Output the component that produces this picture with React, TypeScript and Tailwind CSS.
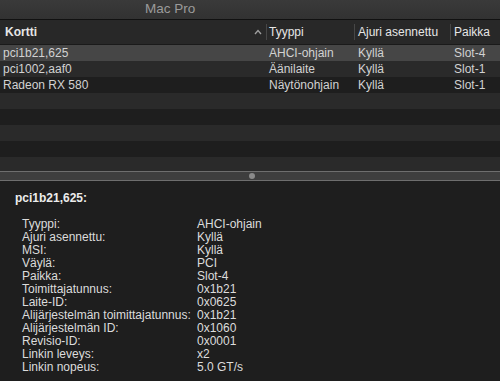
import React from "react";

interface Device {
  name: string;
  type: string;
  driver: string;
  slot: string;
}

const devices: Device[] = [
  { name: "pci1b21,625", type: "AHCI-ohjain", driver: "Kyllä", slot: "Slot-4" },
  { name: "pci1002,aaf0", type: "Äänilaite", driver: "Kyllä", slot: "Slot-1" },
  { name: "Radeon RX 580", type: "Näytönohjain", driver: "Kyllä", slot: "Slot-1" },
];

const details: [string, string][] = [
  ["Tyyppi:", "AHCI-ohjain"],
  ["Ajuri asennettu:", "Kyllä"],
  ["MSI:", "Kyllä"],
  ["Väylä:", "PCI"],
  ["Paikka:", "Slot-4"],
  ["Toimittajatunnus:", "0x1b21"],
  ["Laite-ID:", "0x0625"],
  ["Alijärjestelmän toimittajatunnus:", "0x1b21"],
  ["Alijärjestelmän ID:", "0x1060"],
  ["Revisio-ID:", "0x0001"],
  ["Linkin leveys:", "x2"],
  ["Linkin nopeus:", "5.0 GT/s"],
];

const App: React.FC = () => {
  const rows = Array.from({ length: 8 }, (_, i) => devices[i]);

  return (
    <div
      className="w-[500px] h-[381px] overflow-hidden bg-[#1e1e1e] flex flex-col text-[12px]"
      style={{ fontFamily: '"Liberation Sans", Arial, sans-serif' }}
    >
      {/* Title bar */}
      <div className="h-[20px] shrink-0 bg-gradient-to-b from-[#3a3a3a] to-[#323232] border-b border-[#111] flex items-center">
        <span className="ml-[145px] text-[13.5px] text-[#9b9b9b]">Mac Pro</span>
      </div>

      {/* Column headers */}
      <div className="h-[25px] shrink-0 bg-[#282828] border-b border-[#1a1a1a] flex items-center text-[#e6e6e6]">
        <div className="w-[250px] pl-[5px] font-bold">Kortti</div>
        <div className="w-[16px] flex items-center justify-center">
          <svg width="8" height="6" viewBox="0 0 8 6">
            <path d="M1 5 L4 1.5 L7 5" fill="none" stroke="#a0a0a0" strokeWidth="1.3" />
          </svg>
        </div>
        <div className="w-[88px] h-[16px] border-l border-[#474747] pl-[2px] flex items-center">Tyyppi</div>
        <div className="w-[96px] h-[16px] border-l border-[#474747] pl-[3px] flex items-center">Ajuri asennettu</div>
        <div className="flex-1 h-[16px] border-l border-[#474747] pl-[3px] flex items-center">Paikka</div>
      </div>

      {/* Table rows */}
      <div className="h-[126px] shrink-0 overflow-hidden">
        {rows.map((d, i) => (
          <div
            key={i}
            className={`h-[16px] flex items-center text-[#d2d2d2] ${
              i === 0 ? "bg-[#464646]" : i % 2 === 1 ? "bg-[#2a2a2a]" : "bg-[#1e1e1e]"
            }`}
          >
            {d && (
              <>
                <div className="w-[266px] pl-[3px]">{d.name}</div>
                <div className="w-[89px] pl-[3px]">{d.type}</div>
                <div className="w-[96px] pl-[3px]">{d.driver}</div>
                <div className="flex-1 pl-[3px]">{d.slot}</div>
              </>
            )}
          </div>
        ))}
      </div>

      {/* Splitter */}
      <div className="h-[10px] shrink-0 bg-[#3e3e3e] border-y border-[#6e6e6e] flex items-center justify-center">
        <div className="w-[6px] h-[6px] rounded-full bg-[#8a8a8a] ml-[3px]" />
      </div>

      {/* Details */}
      <div className="flex-1 bg-[#1e1e1e] text-[#dcdcdc] pl-[15px] pt-[10px]">
        <div className="font-bold text-[#ececec] leading-[15px]">pci1b21,625:</div>
        <div className="mt-[12px] pl-[7px] grid grid-cols-[175px_1fr] leading-[13px]">
          {details.map(([k, v]) => (
            <React.Fragment key={k}>
              <div>{k}</div>
              <div>{v}</div>
            </React.Fragment>
          ))}
        </div>
      </div>
    </div>
  );
};

export default App;
